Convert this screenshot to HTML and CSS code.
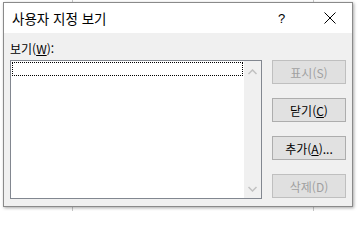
FILE: index.html
```html
<!DOCTYPE html>
<html lang="ko">
<head>
<meta charset="utf-8">
<title>사용자 지정 보기</title>
<link rel="stylesheet" href="styles.css">
</head>
<body>
<div class="sheet">
  <div class="dialog">
    <div class="titlebar">
      <span class="title">사용자 지정 보기</span>
      <span class="help">?</span>
      <span class="close">
        <svg width="12" height="12" viewBox="0 0 12 12"><path d="M0.5 0.5 L11.5 11.5 M11.5 0.5 L0.5 11.5" stroke="#000" stroke-width="1" fill="none"/></svg>
      </span>
    </div>
    <div class="body">
      <div class="left">
        <div class="label">보기(<u>W</u>):</div>
        <div class="listbox">
          <div class="items"><div class="focus"></div></div>
          <div class="scroll">
            <svg width="9" height="6" viewBox="0 0 9 6"><path d="M0.5 5 L4.5 1 L8.5 5" stroke="#c1c1c1" stroke-width="1.5" fill="none"/></svg>
            <svg width="9" height="6" viewBox="0 0 9 6"><path d="M0.5 1 L4.5 5 L8.5 1" stroke="#c1c1c1" stroke-width="1.5" fill="none"/></svg>
          </div>
        </div>
      </div>
      <div class="buttons">
        <div class="btn disabled">표시(S)</div>
        <div class="btn">닫기(<u>C</u>)</div>
        <div class="btn">추가(<u>A</u>)...</div>
        <div class="btn disabled">삭제(D)</div>
      </div>
    </div>
  </div>
</div>
</body>
</html>
```

FILE: styles.css
```css
html, body {
  margin: 0;
  padding: 0;
}
body {
  width: 358px;
  height: 211px;
  overflow: hidden;
  background: #ffffff;
  font-family: "Noto Sans CJK KR", "Noto Sans", sans-serif;
}
.sheet {
  width: 358px;
  height: 211px;
  box-sizing: border-box;
  padding: 2px 0 0 3px;
  background:
    linear-gradient(#c8c8c8, #c8c8c8) 72px 0 / 1px 100% no-repeat,
    linear-gradient(#c8c8c8, #c8c8c8) 313px 0 / 1px 100% no-repeat,
    #ffffff;
}
.dialog {
  width: 350px;
  height: 205px;
  box-sizing: border-box;
  border: 1px solid #8a8a8a;
  background: #f0f0f0;
  box-shadow: 1px 1px 3px rgba(0, 0, 0, 0.35);
  display: flex;
  flex-direction: column;
}
.titlebar {
  height: 30px;
  background: #ffffff;
  display: flex;
  align-items: center;
  padding-left: 8px;
}
.title {
  font-size: 13.5px;
  color: #000;
  flex: 1;
  line-height: 16px;
}
.help {
  font-size: 13px;
  width: 12px;
  margin-right: 34px;
  color: #000;
  font-family: "Liberation Sans", sans-serif;
}
.close {
  width: 12px;
  height: 12px;
  margin-right: 16px;
  display: flex;
}
.body {
  flex: 1;
  display: flex;
  padding: 8px 6px 0 6px;
  gap: 10px;
}
.left {
  display: flex;
  flex-direction: column;
}
.label {
  font-size: 12px;
  line-height: 16px;
  height: 16px;
  margin-bottom: 3px;
  color: #000;
}
.listbox {
  width: 252px;
  height: 139px;
  box-sizing: border-box;
  border: 1px solid #828790;
  background: #ffffff;
  display: flex;
}
.items {
  flex: 1;
  padding: 1px;
}
.focus {
  height: 14px;
  box-sizing: border-box;
  border: 1px dotted #000;
}
.scroll {
  width: 17px;
  background: #f0f0f0;
  display: flex;
  flex-direction: column;
  justify-content: space-between;
  align-items: center;
  padding: 8px 0 6px;
  box-sizing: border-box;
}
.buttons {
  display: flex;
  flex-direction: column;
  gap: 14px;
  padding-top: 19px;
}
.btn {
  width: 74px;
  height: 24px;
  box-sizing: border-box;
  border: 1px solid #adadad;
  background: #e1e1e1;
  font-size: 12px;
  color: #000;
  display: flex;
  align-items: center;
  justify-content: center;
}
.btn.disabled {
  border-color: #bfbfbf;
  background: #e0e0e0;
  color: #a0a0a0;
}
```
